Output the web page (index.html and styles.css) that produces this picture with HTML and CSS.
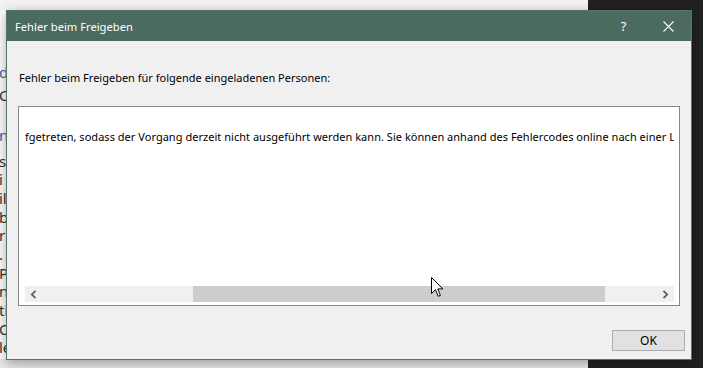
FILE: index.html
```html
<!DOCTYPE html>
<html lang="de">
<head>
<meta charset="UTF-8" />
<title>Fehler beim Freigeben</title>
<link rel="stylesheet" href="styles.css">
</head>
<body>

<div class="desktop">
  <div class="doc">
    <div class="doc-top"></div>
    <div class="doc-text">
      <div class="line link l-d">d</div>
      <div class="line l-c">C</div>
      <div class="line link l-n">n</div>
      <div class="line l-s">s.</div>
      <div class="line">i</div>
      <div class="line">il</div>
      <div class="line">b</div>
      <div class="line">r</div>
      <div class="line">. -</div>
      <div class="line">P</div>
      <div class="line">n</div>
      <div class="line">ti</div>
      <div class="line">O</div>
      <div class="line">le</div>
    </div>
    <div class="doc-bottom"></div>
  </div>
  <div class="side"></div>
</div>

<div class="dialog">
  <div class="titlebar">
    <span class="title">Fehler beim Freigeben</span>
    <div class="caption-btns">
      <span class="cap-btn help">?</span>
      <span class="cap-btn close">
        <svg width="11" height="11" viewBox="0 0 11 11"><path d="M0.5 0.5 L10.5 10.5 M10.5 0.5 L0.5 10.5" stroke="#fff" stroke-width="1.1" fill="none"/></svg>
      </span>
    </div>
  </div>

  <div class="dialog-body">
    <p class="label">Fehler beim Freigeben für folgende eingeladenen Personen:</p>

    <div class="listbox">
      <div class="list-text">fgetreten, sodass der Vorgang derzeit nicht ausgeführt werden kann. Sie können anhand des Fehlercodes online nach einer Lösung suchen.</div>
      <div class="hscroll">
        <span class="arrow">
          <svg width="7" height="9" viewBox="0 0 7 9"><path d="M5.5 0.8 L1.8 4.5 L5.5 8.2" stroke="#606060" stroke-width="1.8" fill="none"/></svg>
        </span>
        <div class="track"><div class="thumb"></div></div>
        <span class="arrow">
          <svg width="7" height="9" viewBox="0 0 7 9"><path d="M1.5 0.8 L5.2 4.5 L1.5 8.2" stroke="#606060" stroke-width="1.8" fill="none"/></svg>
        </span>
      </div>
    </div>

    <div class="buttons">
      <button class="ok">OK</button>
    </div>
  </div>
</div>

<svg class="cursor" width="13" height="21" viewBox="0 0 13 21">
  <path d="M0.5 0.5 L0.5 16.5 L4.5 12.7 L7.2 19.3 L9.4 18.4 L6.8 11.9 L11.8 11.9 Z" fill="#fff" stroke="#000" stroke-width="1"/>
</svg>

</body>
</html>
```

FILE: styles.css
```css
html, body {
  margin: 0; padding: 0;
  width: 703px; height: 368px;
  overflow: hidden;
  font-family: 'Noto Sans', 'Open Sans', sans-serif;
}

.desktop {
  display: flex;
  height: 368px;
}

.doc {
  width: 588px;
  display: flex; flex-direction: column;
  background: #fff;
}
.doc-top {
  height: 10px;
  background: #f4f4f4;
}
.doc-text {
  flex: 1;
  font-size: 15px;
  color: #333;
}
.doc-text .line {
  height: 18.7px;
  line-height: 18.7px;
  margin-left: -1px;
}
.doc-text .l-d { margin-top: 52.6px; }
.doc-text .l-c { margin-top: 4.3px; }
.doc-text .l-n { margin-top: 21.3px; }
.doc-text .l-s { margin-top: 7.3px; }
.doc-text .link { color: #2b6cb5; }
.doc-bottom {
  height: 9px;
  background: #e9e9e9;
}

.side {
  flex: 1;
  background: #212121;
}

.dialog {
  position: absolute;
  left: 6px; top: 10px;
  width: 684px; height: 348px;
  border: 1px solid #56746a;
  background: #f0f0f0;
  display: flex; flex-direction: column;
  box-shadow: 0 3px 12px rgba(0,0,0,0.35);
}

.titlebar {
  height: 30px;
  background: #4b6b60;
  color: #fff;
  display: flex; align-items: center;
  font-size: 11.2px;
}
.title {
  padding-left: 8px;
  flex: 1;
}
.caption-btns {
  display: flex;
  height: 100%;
}
.cap-btn {
  width: 45px;
  display: flex; align-items: center; justify-content: center;
}
.help {
  font-size: 13px;
}

.dialog-body {
  flex: 1;
  display: flex; flex-direction: column;
  padding: 0 11px;
  font-size: 11px;
  color: #000;
}

.label {
  margin: 29px 0 0 1px;
  line-height: 16px;
}

.listbox {
  box-sizing: border-box;
  margin-top: 20px;
  height: 200px;
  border: 1px solid #828790;
  background: #fff;
  display: flex; flex-direction: column;
  padding: 0 5px 3px 6px;
}
.list-text {
  flex: 1;
  padding-top: 22px;
  line-height: 16px;
  letter-spacing: 0.03px;
  white-space: nowrap;
  overflow: hidden;
}

.hscroll {
  height: 16px;
  background: #f0f0f0;
  display: flex; align-items: center;
}
.arrow {
  width: 17px;
  display: flex; align-items: center; justify-content: center;
}
.track {
  flex: 1;
  height: 100%;
  display: flex;
  padding-left: 151px;
  padding-right: 52px;
}
.thumb {
  flex: 1;
  background: #cdcdcd;
}

.buttons {
  display: flex; justify-content: flex-end;
  margin-top: 24px;
  margin-right: -5px;
}
.ok {
  width: 73px; height: 21px;
  background: #e1e1e1;
  border: 1px solid #adadad;
  font-family: inherit;
  font-size: 12px;
  color: #000;
  padding: 0;
}

.cursor {
  position: absolute;
  left: 431px; top: 277px;
}
```
